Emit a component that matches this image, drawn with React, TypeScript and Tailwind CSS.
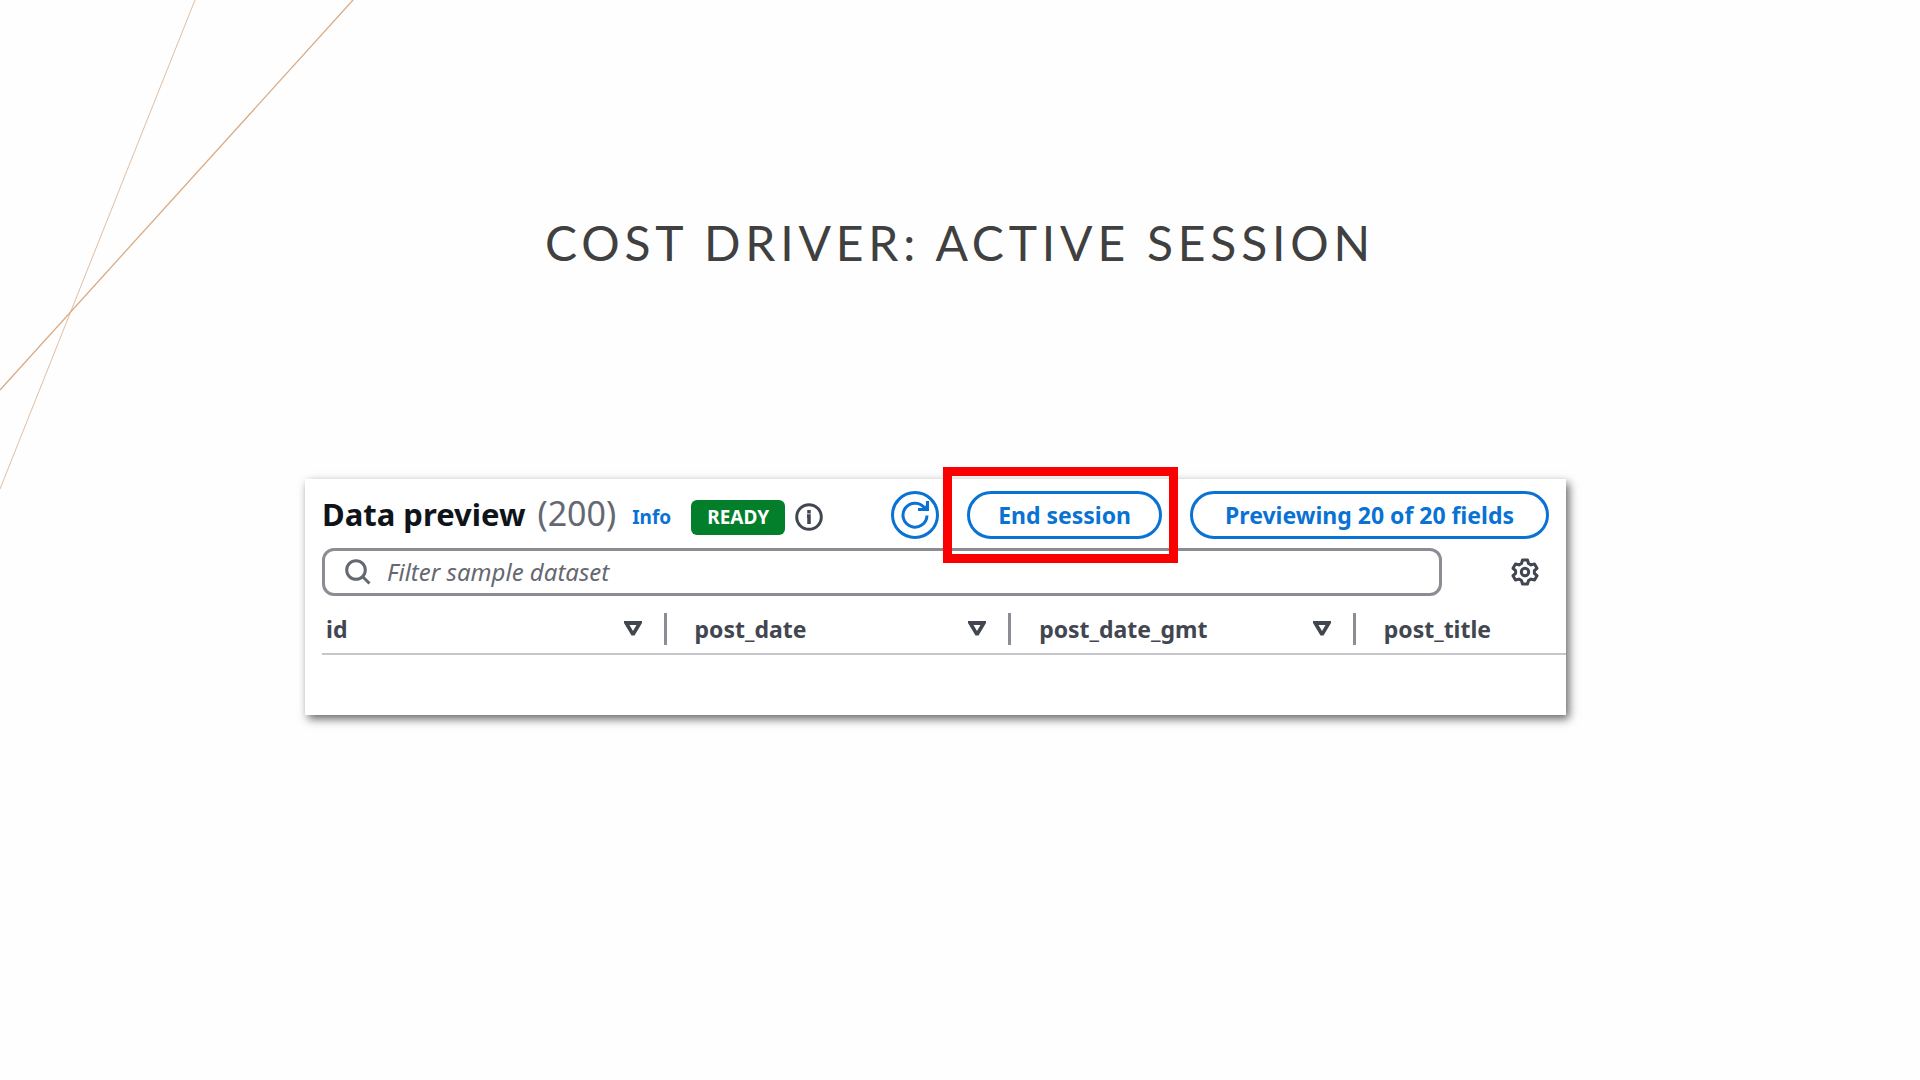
import type { ReactNode } from "react";

const columns = ["id", "post_date", "post_date_gmt", "post_title"];

function AccentLines() {
  return (
    <svg
      className="pointer-events-none absolute left-0 top-0"
      width="360"
      height="492"
      viewBox="0 0 360 492"
      fill="none"
      aria-hidden="true"
    >
      <path d="M195 0L0 489" stroke="#dfbda3" strokeWidth="1" />
      <path d="M353 0L0 390" stroke="#dba981" strokeWidth="1.3" />
    </svg>
  );
}

function InfoIcon() {
  return (
    <svg width="28" height="28" viewBox="0 0 28 28" fill="none" stroke="#424650" strokeWidth="3" aria-hidden="true">
      <circle cx="14" cy="14" r="12.3" />
      <path d="M14 7v3.500M12 13h2v8" strokeWidth="3.500" />
    </svg>
  );
}

function RefreshIcon() {
  return (
    <svg width="28" height="30" viewBox="0 0 28 30" fill="none" stroke="#0972d3" strokeWidth="3" aria-hidden="true">
      <path d="M26 15.500A12 12 0 1 1 24 8.500" />
      <path d="M17 9.500h9.500V1" />
      <path d="M20 9.500h6.500V4z" fill="#0972d3" stroke="none" />
    </svg>
  );
}

function SearchIcon() {
  return (
    <svg width="26" height="26" viewBox="0 0 26 26" fill="none" stroke="#656871" strokeWidth="3" aria-hidden="true">
      <circle cx="11" cy="11" r="9.3" />
      <path d="M17.500 17.500L24.500 24.500" />
    </svg>
  );
}

function GearIcon() {
  return (
    <svg
      width="28"
      height="28"
      viewBox="0 0 28 28"
      fill="none"
      stroke="#424650"
      strokeWidth="3"
      strokeLinejoin="round"
      aria-hidden="true"
    >
      <path d="M11.500 2h5l1 3.500 2.500 1.400 3.500-.9 2.500 4.300-2.600 2.400v2.600l2.600 2.400-2.500 4.300-3.500-.9-2.500 1.400-1 3.500h-5l-1-3.500-2.500-1.400-3.500.9L2 17.700l2.600-2.400v-2.600L2 10.300l2.500-4.300 3.500.9 2.500-1.400z" />
      <circle cx="14" cy="14" r="3.700" />
    </svg>
  );
}

function SortIcon() {
  return (
    <svg width="18" height="15" viewBox="0 0 18 15" fill="#424650" fillRule="evenodd" aria-hidden="true">
      <path d="M0 0H18V2L10.500 14.500H7.500L0 2ZM5.500 4L9 10L12.500 4Z" />
    </svg>
  );
}

function PillButton({ wide = false, children }: { wide?: boolean; children: ReactNode }) {
  return (
    <button
      type="button"
      className={`h-12 whitespace-nowrap rounded-full border-3 border-[#0972d3] text-[23px] leading-none font-bold text-[#0972d3] ${
        wide ? "px-8" : "px-7"
      }`}
    >
      {children}
    </button>
  );
}

function DataPreview() {
  return (
    <section className="bg-white pt-3 pb-15 pl-[17px] font-['Noto_Sans',sans-serif] text-[#424650] shadow-[3px_4px_9px_rgba(0,0,0,0.6)]">
      <div className="flex items-center pr-[17px]">
        <h2 className="flex items-baseline gap-3 pb-1 whitespace-nowrap text-[31px] leading-9 font-bold text-[#0f141a]">
          Data preview
          <span className="text-[34px] font-normal text-[#656871]">(200)</span>
        </h2>
        <a href="#info" className="mt-1 ml-4 text-[19px] leading-6 font-bold text-[#0972d3]">
          Info
        </a>
        <span className="mt-1 ml-5 flex h-[35px] items-center rounded-md bg-[#037f2c] px-4 text-[19px] font-bold text-white">
          READY
        </span>
        <button type="button" aria-label="Session status" className="mt-1 ml-2.5">
          <InfoIcon />
        </button>
        <div className="ml-auto flex items-center gap-7">
          <button
            type="button"
            aria-label="Refresh"
            className="flex size-12 items-center justify-center rounded-full border-3 border-[#0972d3]"
          >
            <RefreshIcon />
          </button>
          <div className="relative">
            <PillButton>End session</PillButton>
            <div className="pointer-events-none absolute -top-6 -right-4 -bottom-6 -left-6 border-9 border-[#fb0000]" />
          </div>
          <PillButton wide>Previewing 20 of 20 fields</PillButton>
        </div>
      </div>

      <div className="mt-[9px] flex items-center justify-between pr-[27px]">
        <label className="flex h-12 w-[92%] items-center gap-4 rounded-xl border-3 border-[#8c8c94] px-5">
          <SearchIcon />
          <input
            type="text"
            aria-label="Filter sample dataset"
            placeholder="Filter sample dataset"
            className="min-w-0 flex-1 bg-transparent text-2xl leading-8 italic outline-none placeholder:text-[#656871]"
          />
        </label>
        <button type="button" aria-label="Preferences">
          <GearIcon />
        </button>
      </div>

      <table className="w-full table-fixed border-b-2 border-[#c6c6cd]">
        <thead>
          <tr>
            {columns.map((name, i) => (
              <th
                key={name}
                scope="col"
                className="h-[58px] p-0 pt-2 text-left text-[23px] leading-8 font-bold not-last:w-[27.7%]"
              >
                <div className={i === 0 ? "flex items-center pl-1" : "flex items-center pl-7"}>
                  {name}
                  {i < columns.length - 1 && (
                    <>
                      <button type="button" aria-label={`Sort by ${name}`} className="ml-auto">
                        <SortIcon />
                      </button>
                      <span className="ml-[22px] h-8 w-[3px] bg-[#8c8c94]" />
                    </>
                  )}
                </div>
              </th>
            ))}
          </tr>
        </thead>
      </table>
    </section>
  );
}

export default function App() {
  return (
    <main className="relative min-h-screen overflow-hidden bg-[#fefefe] pt-[219px]">
      <AccentLines />
      <h1 className="text-center font-['Lato',sans-serif] text-5xl leading-none tracking-widest text-[#404040]">
        COST DRIVER: ACTIVE SESSION
      </h1>
      <div className="mt-[212px] grid grid-cols-[305fr_1261fr_354fr]">
        <div className="col-start-2 min-w-0">
          <DataPreview />
        </div>
      </div>
    </main>
  );
}
